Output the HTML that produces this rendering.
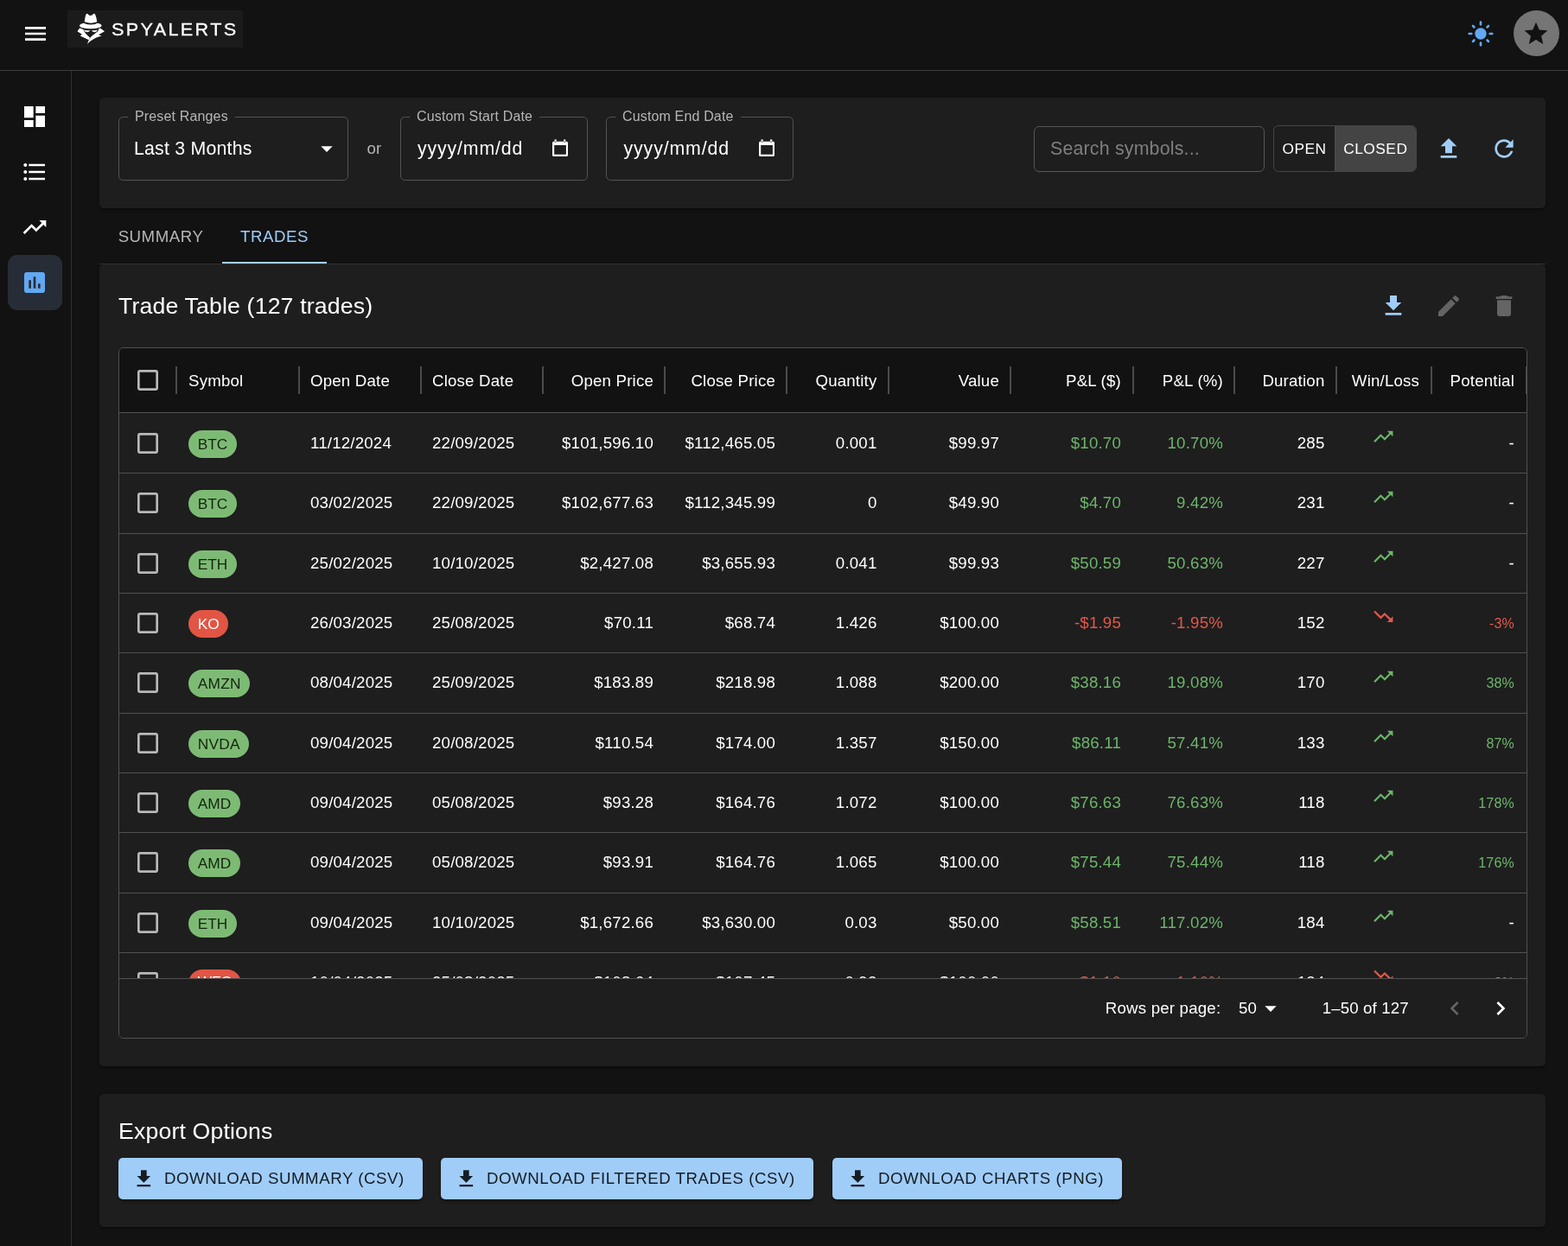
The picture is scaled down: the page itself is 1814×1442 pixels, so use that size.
<!DOCTYPE html>
<html lang="en">
<head>
<meta charset="utf-8">
<title>SpyAlerts - Trades</title>
<style>
*{box-sizing:border-box;margin:0;padding:0}
html,body{width:1814px;height:1442px;overflow:hidden;background:#121212}
body{font-family:"Liberation Sans",Arial,sans-serif;color:#fff;position:relative;-webkit-font-smoothing:antialiased}
svg{display:block;fill:currentColor}
.abs{position:absolute}
#app{position:absolute;left:0;top:0;width:1814px;height:1442px;overflow:hidden;will-change:transform}

/* ---------- app bar ---------- */
#appbar{position:absolute;left:0;top:0;width:1814px;height:82px;background:#121212;border-bottom:1px solid #3d3d3d}
#menu{position:absolute;left:25px;top:23px;width:32px;height:32px;color:#fff}
#logo{position:absolute;left:78px;top:12px;width:203px;height:43px;background:#1b1b1b}
#logo svg{position:absolute;left:6px;top:-2px}
#logo svg.lt{left:51px;top:6.800px}
#sun{position:absolute;left:1697px;top:23px;width:32px;height:32px;color:#62a8f2}
#avatar{position:absolute;left:1751px;top:12px;width:53px;height:53px;border-radius:50%;background:#757575;color:#121212}
#avatar svg{position:absolute;left:9.500px;top:10.500px}

/* ---------- side bar ---------- */
#side{position:absolute;left:0;top:82px;width:83px;height:1360px;border-right:1px solid #2f2f2f;background:#121212}
.nav{position:absolute;left:9px;width:63px;height:64px;border-radius:11px;color:#fff}
.nav svg{position:absolute;left:15px;top:16px}
.nav.sel{background:#272d36;color:#62a8f2}

/* ---------- cards ---------- */
.card{position:absolute;left:115px;width:1673px;background:#1e1e1e;border-radius:5.330px;box-shadow:0 2.700px 1.300px -1.300px rgba(0,0,0,.2),0 1.300px 1.300px 0 rgba(0,0,0,.14),0 1.300px 4px 0 rgba(0,0,0,.12)}
#filters{top:113px;height:128px}
.field{position:absolute;top:22px;height:74px;border:1px solid #535353;border-radius:5.330px}
.field label{position:absolute;left:10px;top:-11px;padding:0 8px;background:#1e1e1e;font-size:16px;line-height:20px;color:#b6b6b6;letter-spacing:.15px;white-space:nowrap}
.field .val{position:absolute;left:17px;top:22px;font-size:21.33px;line-height:28px;color:#fff;white-space:nowrap;letter-spacing:.2px}
.field .ic{position:absolute;color:#fff}
#or{position:absolute;left:309.500px;top:46px;font-size:18.67px;line-height:26px;color:#b6b6b6}
#search{position:absolute;left:1081px;top:33px;width:267px;height:53px;border:1px solid #565656;border-radius:6px}
#search span{position:absolute;left:18px;top:11px;font-size:21.33px;line-height:28px;color:#7f7f7f;letter-spacing:.2px;white-space:nowrap}
#toggle{position:absolute;left:1358px;top:32px;height:54px;width:166px;border:1px solid #454545;border-radius:6px;overflow:hidden;font-size:17.33px;letter-spacing:.5px;line-height:52px;color:#fff}
#toggle div{position:absolute;top:0;height:52px;text-align:center}
#toggle .o{left:0;width:70px}
#toggle .c{left:70px;width:95px;background:#444;border-left:1px solid #4f4f4f;text-indent:-1.400px}
.ib{position:absolute;width:32px;height:32px;color:#a0cdf8}

/* ---------- tabs ---------- */
#tabs{position:absolute;left:115px;top:241px;width:1673px;height:65px;border-bottom:1px solid #333}
.tab{position:absolute;top:0;height:64px;line-height:66px;font-size:18.67px;letter-spacing:.53px;color:#b6b6b6;text-align:center}
.tab.on{color:#a0cdf8}
.tab.on:after{content:"";position:absolute;left:0;right:0;top:62px;height:2px;background:#a3d1fa}

/* ---------- trade table ---------- */
#trades{top:306px;height:928px}
h2{position:absolute;left:22px;font-weight:400;font-size:26.67px;line-height:42px;letter-spacing:.16px;color:#fff;white-space:nowrap}
#grid{position:absolute;left:22px;top:96px;width:1630px;height:800px;border:1px solid #515151;border-radius:6px;overflow:hidden;font-size:18.67px}
#ghead{position:absolute;left:0;top:0;width:1628px;height:75px;background:#121212;border-bottom:1px solid #515151}
.th{position:absolute;top:0;height:74px;line-height:75px;white-space:nowrap;color:#fff;letter-spacing:.2px}
.sep{position:absolute;top:21px;width:2px;height:32px;background:#4b4b4b}
.row{position:absolute;left:0;width:1628px;height:69.33px}
.ln{position:absolute;left:0;width:1628px;height:1px;background:#515151}
.row span{position:absolute;top:-.350px;height:68px;line-height:70.600px;white-space:nowrap;letter-spacing:.2px}
.r{text-align:right}
.c2{left:221px}.c3{left:362px}
.c4{left:491px;width:127px}.c5{left:632px;width:127px}.c6{left:772.500px;width:104px}.c7{left:891px;width:127px}
.c8{left:1032px;width:127px}.c9{left:1173px;width:104px}.c10{left:1290.500px;width:104px}.c12{left:1518px;width:96px}
.cb{position:absolute;left:17px;top:18.670px;width:32px;height:32px;color:#b9b9b9}
.chip{position:absolute;left:80px;top:19.650px;height:32px;border-radius:16px;padding:0 10.670px;font-size:17.330px;line-height:32px;color:#1a2a18}
.g{color:#6cb56a}.d{color:#e4574a}
.chip.g{background:#7dbb75;color:#16240f}
.chip.d{background:#e25544;color:#fff}
.row svg.g,.row svg.d{position:absolute;left:1449px;top:14px}
.row span.pot{font-size:16px;line-height:72.600px}
#gfoot{position:absolute;left:0;top:729px;width:1628px;height:69px;background:#1e1e1e;border-top:1px solid #515151;font-size:18.670px;color:#fff}
#gfoot span{position:absolute;top:0;line-height:67px;white-space:nowrap;letter-spacing:.2px}

/* ---------- export ---------- */
#export{top:1266px;height:154px}
.btn{position:absolute;top:74px;height:48px;border-radius:5px;background:#a0cdf8;color:#151c22;font-size:18.67px;line-height:48px;letter-spacing:.55px;white-space:nowrap;box-shadow:0 3px 3px rgba(0,0,0,.3)}
.btn svg{position:absolute;left:15.500px;top:11.200px}
.btn span{position:absolute;left:53px;top:0}
</style>
</head>
<body>
<div id="app">

<div id="appbar">
  <div id="menu"><svg width="32" height="32" viewBox="0 0 24 24"><path d="M3 18h18v-2H3v2zm0-5h18v-2H3v2zm0-7v2h18V6H3z"/></svg></div>
  <div id="logo">
    <svg width="44" height="46" viewBox="0 0 1379 1442"><g fill="#fff"><path d="M430 480C440 380 460 260 490 200Q520 165 560 200Q650 300 740 200Q780 160 815 200C850 270 875 380 885 480Q660 565 430 480Z"/><path d="M248 620C260 570 330 535 400 522Q660 645 905 522C980 535 1045 570 1055 620C1040 695 850 728 650 728C450 728 260 695 248 620Z"/><path d="M258 705L170 825L340 935L275 985L590 1140L628 1050C520 960 425 860 385 750Z"/><path d="M1000 705L1160 825L940 950L1050 990C850 1040 650 1150 540 1285C560 1180 620 1060 700 990C780 920 900 850 932 800L940 745Z"/><path d="M405 765Q520 792 638 792Q600 850 520 856Q440 840 405 765Z"/><path d="M908 765Q800 792 688 792Q720 850 800 856Q872 840 908 765Z"/></g></svg>
    <svg class="lt" width="150" height="30" viewBox="0 0 150 30"><text x="0" y="22" transform="scale(1.05 1)" font-family="Liberation Sans, Arial, sans-serif" font-size="20.600" fill="#fff" stroke="#fff" stroke-width=".3" textLength="137.300" lengthAdjust="spacing">SPYALERTS</text></svg>
  </div>
  <div id="sun"><svg width="32" height="32" viewBox="0 0 24 24"><path d="M12 7c-2.760 0-5 2.240-5 5s2.240 5 5 5 5-2.240 5-5-2.240-5-5-5zM2 13h2c.55 0 1-.45 1-1s-.45-1-1-1H2c-.55 0-1 .45-1 1s.45 1 1 1zm18 0h2c.55 0 1-.45 1-1s-.45-1-1-1h-2c-.55 0-1 .45-1 1s.45 1 1 1zM11 2v2c0 .55.45 1 1 1s1-.45 1-1V2c0-.55-.45-1-1-1s-1 .45-1 1zm0 18v2c0 .55.45 1 1 1s1-.45 1-1v-2c0-.55-.45-1-1-1s-1 .45-1 1zM5.990 4.580c-.39-.39-1.030-.39-1.410 0-.39.39-.39 1.030 0 1.410l1.060 1.060c.39.39 1.030.39 1.410 0s.39-1.030 0-1.410L5.990 4.580zm12.370 12.370c-.39-.39-1.030-.39-1.410 0-.39.39-.39 1.030 0 1.410l1.060 1.060c.39.39 1.030.39 1.410 0 .39-.39.39-1.030 0-1.410l-1.060-1.060zm1.060-10.960c.39-.39.39-1.030 0-1.410-.39-.39-1.030-.39-1.410 0l-1.060 1.060c-.39.39-.39 1.030 0 1.410s1.030.39 1.410 0l1.060-1.060zM7.050 18.360c.39-.39.39-1.030 0-1.410-.39-.39-1.030-.39-1.410 0l-1.060 1.060c-.39.39-.39 1.030 0 1.410s1.030.39 1.410 0l1.060-1.060z"/></svg></div>
  <div id="avatar"><svg width="32" height="32" viewBox="0 0 24 24"><path d="M12 17.270L18.180 21l-1.640-7.030L22 9.240l-7.190-.61L12 2 9.190 8.630 2 9.240l5.460 4.730L5.820 21z"/></svg></div>
</div>

<div id="side">
  <div class="nav" style="top:21px"><svg width="32" height="32" viewBox="0 0 24 24"><path d="M3 13h8V3H3v10zm0 8h8v-6H3v6zm10 0h8V11h-8v10zm0-18v6h8V3h-8z"/></svg></div>
  <div class="nav" style="top:85px"><svg width="32" height="32" viewBox="0 0 24 24"><path d="M4 10.500c-.83 0-1.500.67-1.500 1.500s.67 1.500 1.500 1.500 1.500-.67 1.500-1.500-.67-1.500-1.500-1.500zm0-6c-.83 0-1.500.67-1.500 1.500S3.170 7.500 4 7.500 5.500 6.830 5.500 6 4.830 4.500 4 4.500zm0 12c-.83 0-1.500.68-1.500 1.500s.68 1.500 1.500 1.500 1.500-.68 1.500-1.500-.67-1.500-1.500-1.500zM7 19h14v-2H7v2zm0-6h14v-2H7v2zm0-8v2h14V5H7z"/></svg></div>
  <div class="nav" style="top:149px"><svg width="32" height="32" viewBox="0 0 24 24"><path d="M16 6l2.290 2.290-4.880 4.880-4-4L2 16.590 3.410 18l6-6 4 4 6.300-6.290L22 12V6z"/></svg></div>
  <div class="nav sel" style="top:213px"><svg width="32" height="32" viewBox="0 0 24 24"><path d="M19 3H5c-1.100 0-2 .9-2 2v14c0 1.100.9 2 2 2h14c1.100 0 2-.9 2-2V5c0-1.100-.9-2-2-2zM9 17H7v-7h2v7zm4 0h-2V7h2v10zm4 0h-2v-4h2v4z"/></svg></div>
</div>

<div id="filters" class="card">
  <div class="field" style="left:22px;width:266px">
    <label>Preset Ranges</label>
    <div class="val">Last 3 Months</div>
    <div class="ic" style="left:224px;top:20px"><svg width="32" height="32" viewBox="0 0 24 24"><path d="M7 10l5 5 5-5z"/></svg></div>
  </div>
  <div id="or">or</div>
  <div class="field" style="left:348px;width:217px">
    <label>Custom Start Date</label>
    <div class="val" style="letter-spacing:.85px;left:19px;top:21.500px">yyyy/mm/dd</div>
    <div class="ic" style="left:174px;top:24px"><svg width="20" height="22" viewBox="0 0 20 22"><path fill="#fff" fill-rule="evenodd" d="M2.500 3.700h15a1.500 1.500 0 0 1 1.500 1.500v14.300a1.500 1.500 0 0 1-1.500 1.500h-15a1.500 1.500 0 0 1-1.500-1.500V5.200a1.500 1.500 0 0 1 1.500-1.500zM3.200 8v10.700h13.700V8zM3.500 1.400h2.300v3h-2.300zM14 1.400h2.300v3H14z"/></svg></div>
  </div>
  <div class="field" style="left:586px;width:217px">
    <label>Custom End Date</label>
    <div class="val" style="letter-spacing:.85px;left:19.600px;top:21.500px">yyyy/mm/dd</div>
    <div class="ic" style="left:175px;top:24px"><svg width="20" height="22" viewBox="0 0 20 22"><path fill="#fff" fill-rule="evenodd" d="M2.500 3.700h15a1.500 1.500 0 0 1 1.500 1.500v14.300a1.500 1.500 0 0 1-1.500 1.500h-15a1.500 1.500 0 0 1-1.500-1.500V5.200a1.500 1.500 0 0 1 1.500-1.500zM3.200 8v10.700h13.700V8zM3.500 1.400h2.300v3h-2.300zM14 1.400h2.300v3H14z"/></svg></div>
  </div>
  <div id="search"><span>Search symbols...</span></div>
  <div id="toggle"><div class="o">OPEN</div><div class="c">CLOSED</div></div>
  <div class="ib" style="left:1545px;top:42.700px"><svg width="32" height="32" viewBox="0 0 24 24"><path d="M5 20h14v-2H5v2zm0-10h4v6h6v-6h4l-7-7-7 7z"/></svg></div>
  <div class="ib" style="left:1609px;top:42.700px"><svg width="32" height="32" viewBox="0 0 24 24"><path d="M17.650 6.350C16.200 4.900 14.210 4 12 4c-4.420 0-7.990 3.580-7.990 8s3.570 8 7.990 8c3.730 0 6.840-2.550 7.730-6h-2.080c-.82 2.330-3.040 4-5.650 4-3.310 0-6-2.690-6-6s2.690-6 6-6c1.660 0 3.140.69 4.220 1.780L13 11h7V4l-2.350 2.350z"/></svg></div>
</div>

<div id="tabs">
  <div class="tab" style="left:0;width:142px">SUMMARY</div>
  <div class="tab on" style="left:142px;width:121px">TRADES</div>
</div>

<div id="trades" class="card">
  <h2 style="top:27px">Trade Table (127 trades)</h2>
  <div class="ib" style="left:1481px;top:32.300px"><svg width="32" height="32" viewBox="0 0 24 24"><path d="M5 20h14v-2H5v2zM19 9h-4V3H9v6H5l7 7 7-7z"/></svg></div>
  <div class="ib" style="left:1545px;top:32.300px;color:#646464"><svg width="32" height="32" viewBox="0 0 24 24"><path d="M3 17.250V21h3.750L17.810 9.940l-3.750-3.750L3 17.250zM20.710 7.040c.39-.39.39-1.020 0-1.410l-2.340-2.340a.9959.9959 0 0 0-1.410 0l-1.830 1.830 3.750 3.750 1.830-1.830z"/></svg></div>
  <div class="ib" style="left:1609px;top:32.300px;color:#646464"><svg width="32" height="32" viewBox="0 0 24 24"><path d="M6 19c0 1.100.9 2 2 2h8c1.100 0 2-.9 2-2V7H6v12zM19 4h-3.500l-1-1h-5l-1 1H5v2h14V4z"/></svg></div>

  <div id="grid">
    <div id="ghead">
      <svg class="cb" style="top:21px" width="32" height="32" viewBox="0 0 24 24"><path d="M19 5v14H5V5h14m0-2H5c-1.100 0-2 .9-2 2v14c0 1.100.9 2 2 2h14c1.100 0 2-.9 2-2V5c0-1.100-.9-2-2-2z"/></svg>
      <div class="th" style="left:80px">Symbol</div>
      <div class="th" style="left:221px">Open Date</div>
      <div class="th" style="left:362px">Close Date</div>
      <div class="th r" style="left:491px;width:127px">Open Price</div>
      <div class="th r" style="left:632px;width:127px">Close Price</div>
      <div class="th r" style="left:772.500px;width:104px">Quantity</div>
      <div class="th r" style="left:891px;width:127px">Value</div>
      <div class="th r" style="left:1032px;width:127px">P&amp;L ($)</div>
      <div class="th r" style="left:1173px;width:104px">P&amp;L (%)</div>
      <div class="th r" style="left:1290.500px;width:104px">Duration</div>
      <div class="th" style="left:1410px;width:110px;text-align:center">Win/Loss</div>
      <div class="th r" style="left:1518px;width:96px">Potential</div>
      <i class="sep" style="left:65px"></i><i class="sep" style="left:207px"></i><i class="sep" style="left:348px"></i><i class="sep" style="left:489px"></i><i class="sep" style="left:630px"></i><i class="sep" style="left:771px"></i><i class="sep" style="left:889px"></i><i class="sep" style="left:1030px"></i><i class="sep" style="left:1172px"></i><i class="sep" style="left:1289px"></i><i class="sep" style="left:1407px"></i><i class="sep" style="left:1517px"></i><i class="sep" style="left:1627px"></i>
    </div>
    <div id="rows">
<div class="row" style="top:75.40px"><svg class="cb" width="32" height="32" viewBox="0 0 24 24"><path d="M19 5v14H5V5h14m0-2H5c-1.100 0-2 .9-2 2v14c0 1.100.9 2 2 2h14c1.100 0 2-.9 2-2V5c0-1.100-.9-2-2-2z"/></svg><div class="chip g">BTC</div><span class="c2">11/12/2024</span><span class="c3">22/09/2025</span><span class="r c4">$101,596.10</span><span class="r c5">$112,465.05</span><span class="r c6">0.001</span><span class="r c7">$99.97</span><span class="r c8 g">$10.70</span><span class="r c9 g">10.70%</span><span class="r c10">285</span><svg class="g" width="26.670" height="26.670" viewBox="0 0 24 24"><path d="M16 6l2.290 2.290-4.880 4.880-4-4L2 16.590 3.410 18l6-6 4 4 6.300-6.290L22 12V6z"/></svg><span class="r c12">-</span></div>
<div class="row" style="top:144.73px"><svg class="cb" width="32" height="32" viewBox="0 0 24 24"><path d="M19 5v14H5V5h14m0-2H5c-1.100 0-2 .9-2 2v14c0 1.100.9 2 2 2h14c1.100 0 2-.9 2-2V5c0-1.100-.9-2-2-2z"/></svg><div class="chip g">BTC</div><span class="c2">03/02/2025</span><span class="c3">22/09/2025</span><span class="r c4">$102,677.63</span><span class="r c5">$112,345.99</span><span class="r c6">0</span><span class="r c7">$49.90</span><span class="r c8 g">$4.70</span><span class="r c9 g">9.42%</span><span class="r c10">231</span><svg class="g" width="26.670" height="26.670" viewBox="0 0 24 24"><path d="M16 6l2.290 2.290-4.880 4.880-4-4L2 16.590 3.410 18l6-6 4 4 6.300-6.290L22 12V6z"/></svg><span class="r c12">-</span></div>
<div class="row" style="top:214.07px"><svg class="cb" width="32" height="32" viewBox="0 0 24 24"><path d="M19 5v14H5V5h14m0-2H5c-1.100 0-2 .9-2 2v14c0 1.100.9 2 2 2h14c1.100 0 2-.9 2-2V5c0-1.100-.9-2-2-2z"/></svg><div class="chip g">ETH</div><span class="c2">25/02/2025</span><span class="c3">10/10/2025</span><span class="r c4">$2,427.08</span><span class="r c5">$3,655.93</span><span class="r c6">0.041</span><span class="r c7">$99.93</span><span class="r c8 g">$50.59</span><span class="r c9 g">50.63%</span><span class="r c10">227</span><svg class="g" width="26.670" height="26.670" viewBox="0 0 24 24"><path d="M16 6l2.290 2.290-4.880 4.880-4-4L2 16.590 3.410 18l6-6 4 4 6.300-6.290L22 12V6z"/></svg><span class="r c12">-</span></div>
<div class="row" style="top:283.40px"><svg class="cb" width="32" height="32" viewBox="0 0 24 24"><path d="M19 5v14H5V5h14m0-2H5c-1.100 0-2 .9-2 2v14c0 1.100.9 2 2 2h14c1.100 0 2-.9 2-2V5c0-1.100-.9-2-2-2z"/></svg><div class="chip d">KO</div><span class="c2">26/03/2025</span><span class="c3">25/08/2025</span><span class="r c4">$70.11</span><span class="r c5">$68.74</span><span class="r c6">1.426</span><span class="r c7">$100.00</span><span class="r c8 d">-$1.95</span><span class="r c9 d">-1.95%</span><span class="r c10">152</span><svg class="d" width="26.670" height="26.670" viewBox="0 0 24 24"><path d="M16 18l2.290-2.290-4.880-4.880-4 4L2 7.410 3.410 6l6 6 4-4 6.300 6.290L22 12v6z"/></svg><span class="r pot c12 d">-3%</span></div>
<div class="row" style="top:352.73px"><svg class="cb" width="32" height="32" viewBox="0 0 24 24"><path d="M19 5v14H5V5h14m0-2H5c-1.100 0-2 .9-2 2v14c0 1.100.9 2 2 2h14c1.100 0 2-.9 2-2V5c0-1.100-.9-2-2-2z"/></svg><div class="chip g" style="letter-spacing:.25px">AMZN</div><span class="c2">08/04/2025</span><span class="c3">25/09/2025</span><span class="r c4">$183.89</span><span class="r c5">$218.98</span><span class="r c6">1.088</span><span class="r c7">$200.00</span><span class="r c8 g">$38.16</span><span class="r c9 g">19.08%</span><span class="r c10">170</span><svg class="g" width="26.670" height="26.670" viewBox="0 0 24 24"><path d="M16 6l2.290 2.290-4.880 4.880-4-4L2 16.590 3.410 18l6-6 4 4 6.300-6.290L22 12V6z"/></svg><span class="r pot c12 g">38%</span></div>
<div class="row" style="top:422.07px"><svg class="cb" width="32" height="32" viewBox="0 0 24 24"><path d="M19 5v14H5V5h14m0-2H5c-1.100 0-2 .9-2 2v14c0 1.100.9 2 2 2h14c1.100 0 2-.9 2-2V5c0-1.100-.9-2-2-2z"/></svg><div class="chip g" style="letter-spacing:.25px">NVDA</div><span class="c2">09/04/2025</span><span class="c3">20/08/2025</span><span class="r c4">$110.54</span><span class="r c5">$174.00</span><span class="r c6">1.357</span><span class="r c7">$150.00</span><span class="r c8 g">$86.11</span><span class="r c9 g">57.41%</span><span class="r c10">133</span><svg class="g" width="26.670" height="26.670" viewBox="0 0 24 24"><path d="M16 6l2.290 2.290-4.880 4.880-4-4L2 16.590 3.410 18l6-6 4 4 6.300-6.290L22 12V6z"/></svg><span class="r pot c12 g">87%</span></div>
<div class="row" style="top:491.40px"><svg class="cb" width="32" height="32" viewBox="0 0 24 24"><path d="M19 5v14H5V5h14m0-2H5c-1.100 0-2 .9-2 2v14c0 1.100.9 2 2 2h14c1.100 0 2-.9 2-2V5c0-1.100-.9-2-2-2z"/></svg><div class="chip g">AMD</div><span class="c2">09/04/2025</span><span class="c3">05/08/2025</span><span class="r c4">$93.28</span><span class="r c5">$164.76</span><span class="r c6">1.072</span><span class="r c7">$100.00</span><span class="r c8 g">$76.63</span><span class="r c9 g">76.63%</span><span class="r c10">118</span><svg class="g" width="26.670" height="26.670" viewBox="0 0 24 24"><path d="M16 6l2.290 2.290-4.880 4.880-4-4L2 16.590 3.410 18l6-6 4 4 6.300-6.290L22 12V6z"/></svg><span class="r pot c12 g">178%</span></div>
<div class="row" style="top:560.73px"><svg class="cb" width="32" height="32" viewBox="0 0 24 24"><path d="M19 5v14H5V5h14m0-2H5c-1.100 0-2 .9-2 2v14c0 1.100.9 2 2 2h14c1.100 0 2-.9 2-2V5c0-1.100-.9-2-2-2z"/></svg><div class="chip g">AMD</div><span class="c2">09/04/2025</span><span class="c3">05/08/2025</span><span class="r c4">$93.91</span><span class="r c5">$164.76</span><span class="r c6">1.065</span><span class="r c7">$100.00</span><span class="r c8 g">$75.44</span><span class="r c9 g">75.44%</span><span class="r c10">118</span><svg class="g" width="26.670" height="26.670" viewBox="0 0 24 24"><path d="M16 6l2.290 2.290-4.880 4.880-4-4L2 16.590 3.410 18l6-6 4 4 6.300-6.290L22 12V6z"/></svg><span class="r pot c12 g">176%</span></div>
<div class="row" style="top:630.07px"><svg class="cb" width="32" height="32" viewBox="0 0 24 24"><path d="M19 5v14H5V5h14m0-2H5c-1.100 0-2 .9-2 2v14c0 1.100.9 2 2 2h14c1.100 0 2-.9 2-2V5c0-1.100-.9-2-2-2z"/></svg><div class="chip g">ETH</div><span class="c2">09/04/2025</span><span class="c3">10/10/2025</span><span class="r c4">$1,672.66</span><span class="r c5">$3,630.00</span><span class="r c6">0.03</span><span class="r c7">$50.00</span><span class="r c8 g">$58.51</span><span class="r c9 g">117.02%</span><span class="r c10">184</span><svg class="g" width="26.670" height="26.670" viewBox="0 0 24 24"><path d="M16 6l2.290 2.290-4.880 4.880-4-4L2 16.590 3.410 18l6-6 4 4 6.300-6.290L22 12V6z"/></svg><span class="r c12">-</span></div>
<div class="row" style="top:699.40px"><svg class="cb" width="32" height="32" viewBox="0 0 24 24"><path d="M19 5v14H5V5h14m0-2H5c-1.100 0-2 .9-2 2v14c0 1.100.9 2 2 2h14c1.100 0 2-.9 2-2V5c0-1.100-.9-2-2-2z"/></svg><div class="chip d" style="line-height:29px">WFC</div><span class="c2">10/04/2025</span><span class="c3">25/08/2025</span><span class="r c4">$108.64</span><span class="r c5">$107.45</span><span class="r c6">0.92</span><span class="r c7">$100.00</span><span class="r c8 d">-$1.10</span><span class="r c9 d">-1.10%</span><span class="r c10">134</span><svg class="d" width="26.670" height="26.670" viewBox="0 0 24 24"><path d="M16 18l2.290-2.290-4.880-4.880-4 4L2 7.410 3.410 6l6 6 4-4 6.300 6.290L22 12v6z"/></svg><span class="r pot c12 g">2%</span></div>
<i class="ln" style="top:144px"></i>
<i class="ln" style="top:214px"></i>
<i class="ln" style="top:283px"></i>
<i class="ln" style="top:352px"></i>
<i class="ln" style="top:422px"></i>
<i class="ln" style="top:491px"></i>
<i class="ln" style="top:560px"></i>
<i class="ln" style="top:630px"></i>
<i class="ln" style="top:699px"></i>
</div>
    <div id="gfoot">
      <span style="left:1140.800px">Rows per page:</span>
      <span style="left:1295px">50</span>
      <svg class="abs" style="left:1316px;top:18.400px" width="32" height="32" viewBox="0 0 24 24"><path d="M7 10l5 5 5-5z"/></svg>
      <span style="left:1391.700px;letter-spacing:.13px">1–50 of 127</span>
      <svg class="abs" style="left:1528.700px;top:17.600px;color:#646464" width="32" height="32" viewBox="0 0 24 24"><path d="M15.410 16.590L10.830 12l4.580-4.590L14 6l-6 6 6 6 1.410-1.410z"/></svg>
      <svg class="abs" style="left:1582px;top:17.600px" width="32" height="32" viewBox="0 0 24 24"><path d="M8.590 16.590L13.170 12 8.590 7.410 10 6l6 6-6 6-1.410-1.410z"/></svg>
    </div>
  </div>
</div>

<div id="export" class="card">
  <h2 style="top:22px">Export Options</h2>
  <div class="btn" style="left:22px;width:352px"><svg width="26.670" height="26.670" viewBox="0 0 24 24"><path d="M5 20h14v-2H5v2zM19 9h-4V3H9v6H5l7 7 7-7z"/></svg><span>DOWNLOAD SUMMARY (CSV)</span></div>
  <div class="btn" style="left:395px;width:431px"><svg width="26.670" height="26.670" viewBox="0 0 24 24"><path d="M5 20h14v-2H5v2zM19 9h-4V3H9v6H5l7 7 7-7z"/></svg><span>DOWNLOAD FILTERED TRADES (CSV)</span></div>
  <div class="btn" style="left:848px;width:335px"><svg width="26.670" height="26.670" viewBox="0 0 24 24"><path d="M5 20h14v-2H5v2zM19 9h-4V3H9v6H5l7 7 7-7z"/></svg><span>DOWNLOAD CHARTS (PNG)</span></div>
</div>

</div>
</body>
</html>
